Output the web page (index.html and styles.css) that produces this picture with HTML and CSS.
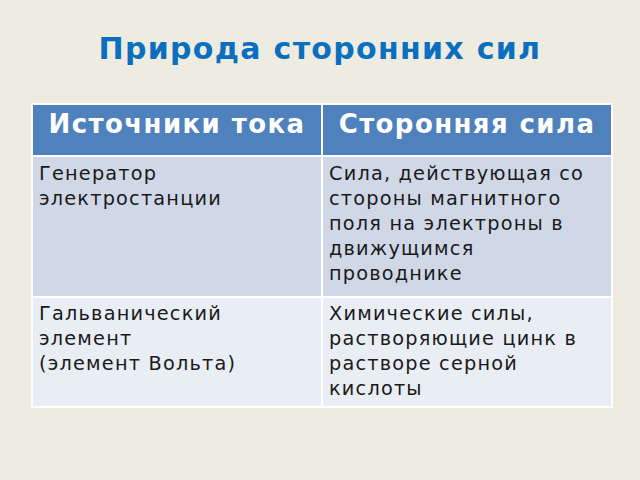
FILE: index.html
```html
<!DOCTYPE html>
<html lang="ru">
<head>
<meta charset="utf-8">
<link rel="stylesheet" href="styles.css">
</head>
<body>
<div class="slide">
  <h1 class="title">Природа сторонних сил</h1>
  <table class="grid">
    <thead>
      <tr>
        <th>Источники тока</th>
        <th>Сторонняя сила</th>
      </tr>
    </thead>
    <tbody>
      <tr class="odd">
        <td>Генератор<br>электростанции</td>
        <td>Сила, действующая со<br>стороны магнитного<br>поля на электроны в<br>движущимся<br>проводнике</td>
      </tr>
      <tr class="even">
        <td>Гальванический<br>элемент<br>(элемент Вольта)</td>
        <td>Химические силы,<br>растворяющие цинк в<br>растворе серной<br>кислоты</td>
      </tr>
    </tbody>
  </table>
</div>
</body>
</html>
```

FILE: styles.css
```css
html, body {
  margin: 0;
  padding: 0;
  background: #eeebe1;
}
.slide {
  width: 640px;
  height: 480px;
  box-sizing: border-box;
  padding-top: 29px;
  padding-left: 31px;
  font-family: "DejaVu Sans", Verdana, sans-serif;
}
.title {
  margin: 0 0 34px -31px;
  width: 640px;
  text-align: center;
  font-size: 30px;
  letter-spacing: 1.3px;
  font-weight: bold;
  color: #0a70be;
  line-height: 40px;
}
.grid {
  border-collapse: collapse;
  width: 582px;
  table-layout: fixed;
}
.grid th, .grid td {
  border: 2px solid #ffffff;
  vertical-align: top;
  width: 50%;
}
.grid th {
  background: #4f81bd;
  color: #ffffff;
  font-size: 26px;
  letter-spacing: 1.4px;
  font-weight: bold;
  text-align: center;
  padding: 4px 4px 0;
  height: 52px;
  box-sizing: border-box;
  line-height: 30px;
  white-space: nowrap;
}
.grid td {
  font-size: 19.3px;
  letter-spacing: 1.2px;
  line-height: 25px;
  color: #1a1a1a;
  padding: 4px 6px 10px;
  text-align: left;
  white-space: nowrap;
}
.odd td { background: #d0d8e8; }
.even td { background: #e9edf4; padding: 3px 6px 5px; }
```
